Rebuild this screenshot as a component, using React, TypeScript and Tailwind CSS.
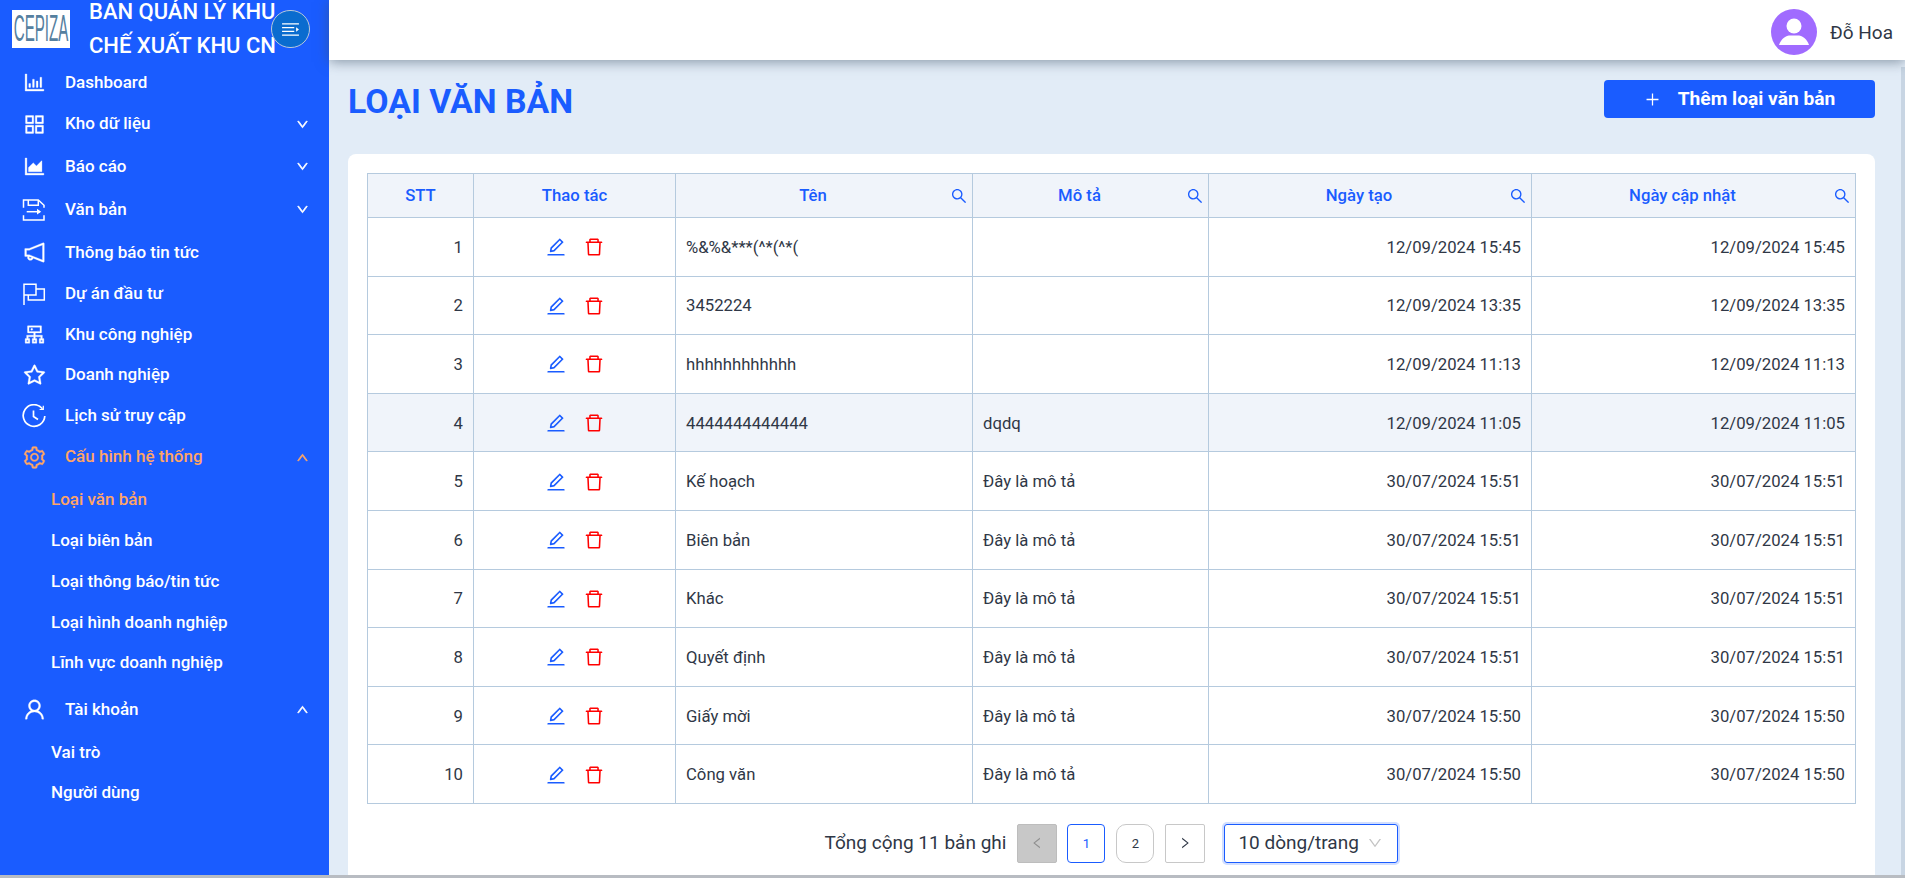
import {
  AiOutlineAppstore,
  AiOutlineAreaChart,
  AiOutlineBarChart,
  AiOutlineCluster,
  AiOutlineDelete,
  AiOutlineDown,
  AiOutlineEdit,
  AiOutlineLeft,
  AiOutlineNotification,
  AiOutlinePlus,
  AiOutlineRight,
  AiOutlineSearch,
  AiOutlineSetting,
  AiOutlineStar,
  AiOutlineUp,
  AiOutlineUser,
} from "react-icons/ai";
import type { ReactNode } from "react";

function DocIcon() {
  return (
    <svg viewBox="0 0 24 24" width="24" height="24" fill="none" stroke="currentColor" strokeWidth="1.5">
      <path d="M1.5 9.7V2H16.3L22 7.3V9.7" />
      <path d="M6.3 2V7.3H16.3V2" />
      <path d="M4.7 13.7H18" />
      <path d="M15 10.8L19.2 13.7L15 16.6Z" fill="currentColor" stroke="none" />
      <path d="M1.5 17.3V22H22V17.3" />
    </svg>
  );
}

function FlagIcon() {
  return (
    <svg viewBox="0 0 24 24" width="24" height="24" fill="none" stroke="currentColor" strokeWidth="1.5">
      <path d="M2 23V2.3H14V13H2" />
      <path d="M14 7H22.3V18H6.3V13" />
    </svg>
  );
}

function HistoryIcon() {
  return (
    <svg viewBox="0 0 24 24" width="24" height="24" fill="none" stroke="currentColor" strokeWidth="1.7">
      <path d="M20.5 4.8A10.8 10.8 0 1 0 22.8 12" />
      <path d="M11.5 6.5V12.5L16 15.5" />
      <path d="M21.3 1.8V5.5H17.6" strokeWidth="1.2" />
    </svg>
  );
}

type NavItem = {
  label: string;
  icon: ReactNode;
  height: string;
  caret?: "up" | "down";
  active?: boolean;
};

const iconStroke = { stroke: "currentColor", strokeWidth: 12 };

const navTop: NavItem[] = [
  { label: "Dashboard", icon: <AiOutlineBarChart size={25} {...iconStroke} />, height: "h-[41px]" },
  { label: "Kho dữ liệu", icon: <AiOutlineAppstore size={25} {...iconStroke} />, height: "h-[42px]", caret: "down" },
  { label: "Báo cáo", icon: <AiOutlineAreaChart size={25} {...iconStroke} />, height: "h-[43px]", caret: "down" },
  { label: "Văn bản", icon: <DocIcon />, height: "h-[43px]", caret: "down" },
  { label: "Thông báo tin tức", icon: <AiOutlineNotification size={25} {...iconStroke} />, height: "h-[43px]" },
  { label: "Dự án đầu tư", icon: <FlagIcon />, height: "h-[40px]" },
  { label: "Khu công nghiệp", icon: <AiOutlineCluster size={25} {...iconStroke} />, height: "h-[41px]" },
  { label: "Doanh nghiệp", icon: <AiOutlineStar size={25} {...iconStroke} />, height: "h-[40px]" },
  { label: "Lịch sử truy cập", icon: <HistoryIcon />, height: "h-[41px]" },
  { label: "Cấu hình hệ thống", icon: <AiOutlineSetting size={25} {...iconStroke} />, height: "h-[42px]", caret: "up", active: true },
];

const configLinks = [
  { label: "Loại văn bản", active: true, height: "h-[42px] pt-[2px]" },
  { label: "Loại biên bản", height: "h-[41px]" },
  { label: "Loại thông báo/tin tức", height: "h-[41px]" },
  { label: "Loại hình doanh nghiệp", height: "h-[41px]" },
  { label: "Lĩnh vực doanh nghiệp", height: "h-[40px]" },
];

const rows = [
  ["%&%&***(^*(^*(", "", "12/09/2024 15:45"],
  ["3452224", "", "12/09/2024 13:35"],
  ["hhhhhhhhhhhh", "", "12/09/2024 11:13"],
  ["4444444444444", "dqdq", "12/09/2024 11:05"],
  ["Kế hoạch", "Đây là mô tả", "30/07/2024 15:51"],
  ["Biên bản", "Đây là mô tả", "30/07/2024 15:51"],
  ["Khác", "Đây là mô tả", "30/07/2024 15:51"],
  ["Quyết định", "Đây là mô tả", "30/07/2024 15:51"],
  ["Giấy mời", "Đây là mô tả", "30/07/2024 15:50"],
  ["Công văn", "Đây là mô tả", "30/07/2024 15:50"],
];

function SideRow({ item }: { item: NavItem }) {
  return (
    <div className={`${item.height} flex items-center pl-[22px] pr-[20px] ${item.active ? "text-[#ffa566]" : "text-white"}`}>
      <span className="w-[43px] shrink-0 flex">{item.icon}</span>
      <span className="flex-1 text-[17px] font-medium">{item.label}</span>
      {item.caret === "down" && <AiOutlineDown size={13} strokeWidth={60} />}
      {item.caret === "up" && <AiOutlineUp size={13} strokeWidth={60} />}
    </div>
  );
}

function SubRow({ label, active, height }: { label: string; active?: boolean; height: string }) {
  return (
    <div className={`${height} flex items-center pl-[51px] text-[17px] font-medium ${active ? "text-[#ffa566]" : "text-white"}`}>
      {label}
    </div>
  );
}

function Sidebar() {
  return (
    <aside className="w-[329px] shrink-0 bg-[#1a5cff] relative">
      <div className="h-[62px] flex items-start overflow-hidden">
        <div className="mt-[10px] ml-[12px] w-[58px] h-[38px] bg-white flex items-center justify-center shrink-0">
          <span className="text-[36px] leading-none text-[#55809f] font-['Liberation_Sans',sans-serif] scale-x-[0.42] whitespace-nowrap">CEPIZA</span>
        </div>
        <div className="ml-[19px] -mt-[5px] text-[22px] leading-[34px] font-medium text-white whitespace-nowrap">
          BAN QUẢN LÝ KHU
          <br />
          CHẾ XUẤT KHU CN
        </div>
      </div>
      <button className="absolute left-[271px] top-[10px] w-[39px] h-[38px] rounded-full bg-[#0a6ccf] border border-[#b9c9d9] flex items-center justify-center">
        <svg viewBox="0 0 20 16" width="19" height="15" fill="none" stroke="white" strokeWidth="1.4">
          <path d="M1 2H19M1 6H14M1 10H14M1 14H19" />
          <path d="M16 5.5L19 8L16 10.5Z" fill="white" stroke="none" />
        </svg>
      </button>
      {navTop.map((item) => (
        <SideRow key={item.label} item={item} />
      ))}
      {configLinks.map((link) => (
        <SubRow key={link.label} {...link} />
      ))}
      <div className="mt-[3px]">
        <SideRow item={{ label: "Tài khoản", icon: <AiOutlineUser size={25} {...iconStroke} />, height: "h-[47px]", caret: "up" }} />
      </div>
      <SubRow label="Vai trò" height="h-[40px]" />
      <SubRow label="Người dùng" height="h-[40px]" />
    </aside>
  );
}

function HeadCell({ label, search, className }: { label: string; search?: boolean; className: string }) {
  return (
    <th className={`${className} relative border border-[#b5cade] font-medium text-[16.7px] text-[#1a5cff] text-center ${search ? "pr-[22px]" : ""}`}>
      {label}
      {search && <AiOutlineSearch size={18} className="absolute right-[4px] top-[13px] text-[#1a5cff]" />}
    </th>
  );
}

export default function App() {
  return (
    <div className="h-[878px] overflow-hidden flex flex-col font-['Roboto',sans-serif] bg-[#e2ecf7]">
      <div className="flex flex-1 min-h-0">
        <Sidebar />
        <div className="flex-1 min-w-0 flex flex-col">
          <header className="h-[60px] shrink-0 bg-white flex items-start justify-end pr-[12px] gap-[13px] shadow-[0_2px_12px_rgba(60,80,100,0.55)] relative">
            <svg viewBox="0 0 46 46" width="46" height="46" className="mt-[9px]">
              <circle cx="23" cy="23" r="23" fill="#a06bff" />
              <circle cx="23" cy="17" r="7.5" fill="white" />
              <path d="M8 36C10 30 15 26.5 18 26.5H28C31 26.5 36 30 38 36Z" fill="white" />
            </svg>
            <span className="text-[19px] text-[#2f3746] mt-[19px]">Đỗ Hoa</span>
          </header>
          <div className="flex flex-1 min-h-0">
            <main className="flex-1 min-w-0 pl-[19px] pr-[26px] pt-[20px] flex flex-col">
              <div className="h-[38px] flex items-center justify-between mb-[36px] shrink-0">
                <h1 className="text-[33.8px] font-bold text-[#1a5cff] mt-[7px]">LOẠI VĂN BẢN</h1>
                <button className="w-[271px] h-[38px] rounded-[4px] bg-[#1a5cff] text-white flex items-center justify-center gap-[17px] text-[19.2px] font-bold">
                  <AiOutlinePlus size={17} />
                  Thêm loại văn bản
                </button>
              </div>
              <section className="flex-1 bg-white rounded-t-[8px] px-[19px] pt-[19px]">
                <table className="w-[1488px] table-fixed border-collapse text-[16.7px] text-[#2f3746]">
                  <thead>
                    <tr className="h-[44px] bg-[#f0f4fa]">
                      <HeadCell label="STT" className="w-[106px]" />
                      <HeadCell label="Thao tác" className="w-[202px]" />
                      <HeadCell label="Tên" search className="w-[297px]" />
                      <HeadCell label="Mô tả" search className="w-[236px]" />
                      <HeadCell label="Ngày tạo" search className="w-[323px]" />
                      <HeadCell label="Ngày cập nhật" search className="w-[324px]" />
                    </tr>
                  </thead>
                  <tbody>
                    {rows.map((row, i) => (
                      <tr key={i} className={`h-[58.6px] ${i === 3 ? "bg-[#f0f4fa]" : ""}`}>
                        <td className="border border-[#b5cade] text-right px-[10px] pt-[1px]">{i + 1}</td>
                        <td className="border border-[#b5cade] pt-[1px]">
                          <div className="flex items-center justify-center gap-[16px]">
                            <AiOutlineEdit size={22} className="text-[#1a5cff]" />
                            <AiOutlineDelete size={22} className="text-[#ff0000]" />
                          </div>
                        </td>
                        <td className="border border-[#b5cade] px-[10px] pt-[1px]">{row[0]}</td>
                        <td className="border border-[#b5cade] px-[10px] pt-[1px]">{row[1]}</td>
                        <td className="border border-[#b5cade] text-right px-[10px] pt-[1px]">{row[2]}</td>
                        <td className="border border-[#b5cade] text-right px-[10px] pt-[1px]">{row[2]}</td>
                      </tr>
                    ))}
                  </tbody>
                </table>
                <div className="mt-[20px] flex items-center justify-center text-[#2f3746]">
                  <span className="text-[19px] mr-[11px] whitespace-nowrap">Tổng cộng 11 bản ghi</span>
                  <span className="w-[40px] h-[39px] bg-[#c8c8c8] border border-[#bdbdbd] rounded-[2px] flex items-center justify-center text-[#8f8f8f]">
                    <AiOutlineLeft size={14} />
                  </span>
                  <span className="ml-[10px] w-[38px] h-[39px] border border-[#1a5cff] rounded-[4px] flex items-center justify-center text-[13px] text-[#1a5cff]">1</span>
                  <span className="ml-[11px] w-[38px] h-[39px] border border-[#c8c8c8] rounded-[10px] flex items-center justify-center text-[13px]">2</span>
                  <span className="ml-[11px] w-[40px] h-[39px] border border-[#c8c8c8] rounded-[2px] flex items-center justify-center">
                    <AiOutlineRight size={14} />
                  </span>
                  <div className="ml-[19px] w-[174px] h-[39px] border border-[#1a5cff] rounded-[3px] shadow-[0_0_0_2px_rgba(26,92,255,0.2)] flex items-center justify-between pl-[13px] pr-[14px] text-[19px] whitespace-nowrap">
                    10 dòng/trang
                    <AiOutlineDown size={16} className="text-[#c4c4c4]" />
                  </div>
                </div>
              </section>
            </main>
            <div className="w-[4px] shrink-0 mt-[7px] bg-[#c8d5e3]" />
          </div>
        </div>
      </div>
      <div className="h-[3px] shrink-0 bg-[#b8bcc2]" />
    </div>
  );
}
